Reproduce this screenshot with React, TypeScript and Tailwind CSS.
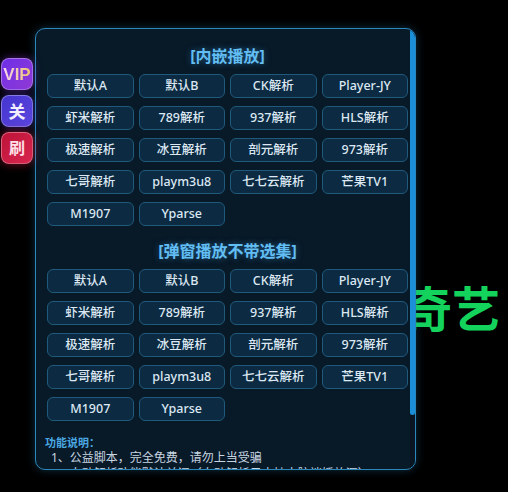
import React from 'react';

const sources = ['默认A', '默认B', 'CK解析', 'Player-JY', '虾米解析', '789解析', '937解析', 'HLS解析', '极速解析', '冰豆解析', '剖元解析', '973解析', '七哥解析', 'playm3u8', '七七云解析', '芒果TV1', 'M1907', 'Yparse'];

function Section({ title, first }: { title: string; first?: boolean }) {
  return (
    <div className={first ? 'pt-[15px]' : 'pt-[13px]'}>
      <div className="h-[24px] mb-[6px] text-center text-[16px] leading-[24px] font-bold text-[#62bdf2] [text-shadow:0_0_6px_rgba(60,160,230,0.5)]">
        {title}
      </div>
      <div className="grid grid-cols-4 gap-x-[5px] gap-y-[8px]">
        {sources.map(s => (
          <button key={s} className="h-[24px] rounded-[6px] border border-[#1f5a7c] bg-[#0c2a42] text-[12.5px] font-medium leading-[22px] text-[#dce8f2] hover:bg-[#12395a] transition-colors">
            {s}
          </button>
        ))}
      </div>
    </div>
  );
}

export default function App() {
  return (
    <div className="relative w-[508px] h-[492px] bg-black overflow-hidden font-['Noto_Sans','Noto_Sans_CJK_SC',sans-serif]">
      {/* page behind the panel */}
      <div className="absolute left-[356px] top-[280px] text-[48px] leading-[52px] font-bold text-[#14d35c] font-['Noto_Sans_CJK_SC',sans-serif]">
        爱奇艺
      </div>

      {/* side buttons */}
      <div className="absolute left-[1px] top-[58px] flex flex-col gap-[5px] z-10">
        <button className="w-[32px] h-[32px] rounded-[8px] border border-white/30 bg-gradient-to-br from-[#6d2ee6] to-[#9138d6] shadow-[0_0_8px_rgba(140,60,230,0.5)] flex items-center justify-center">
          <span className="text-[17px] font-extrabold leading-none bg-gradient-to-r from-[#f6d6f2] to-[#ecc16a] bg-clip-text text-transparent font-['Liberation_Sans',sans-serif]">VIP</span>
        </button>
        <button className="w-[32px] h-[32px] rounded-[8px] border border-white/30 bg-gradient-to-br from-[#4534cf] to-[#5a46de] shadow-[0_0_8px_rgba(80,60,220,0.5)] flex items-center justify-center text-[17px] font-bold text-[#f2eeff] leading-none">
          关
        </button>
        <button className="w-[32px] h-[32px] rounded-[8px] border border-white/30 bg-gradient-to-br from-[#bd1239] to-[#d8264f] shadow-[0_0_10px_rgba(220,30,70,0.55)] flex items-center justify-center text-[16px] font-bold text-[#ffe0e8] leading-none">
          刷
        </button>
      </div>

      {/* panel */}
      <div className="absolute left-[35px] top-[28px] w-[381px] h-[442px] rounded-[10px] border border-[#2b88bd] bg-[#081927] shadow-[0_0_8px_rgba(40,140,200,0.35)] overflow-hidden flex">
        <div className="flex-1 min-w-0 overflow-hidden pl-[11px] pr-[2px]">
          <Section title="[内嵌播放]" first />
          <Section title="[弹窗播放不带选集]" />
          <div className="mt-[15px] -ml-[2px] text-[#c9d6e2]">
            <div className="text-[11px] leading-[14px] font-bold text-[#4aa8e2]">功能说明：</div>
            <div className="pl-[6px] text-[12px] leading-[16px]">
              <div>1、公益脚本，完全免费，请勿上当受骗</div>
              <div>2、自动解析功能默认关闭（自动解析只支持电脑端播放源）</div>
            </div>
          </div>
        </div>
        {/* scrollbar */}
        <div className="w-[5px] shrink-0 bg-[#0a1622] flex flex-col">
          <div className="h-[386px] rounded-b-[3px] bg-[#1b8fd8]" />
        </div>
      </div>
    </div>
  );
}
